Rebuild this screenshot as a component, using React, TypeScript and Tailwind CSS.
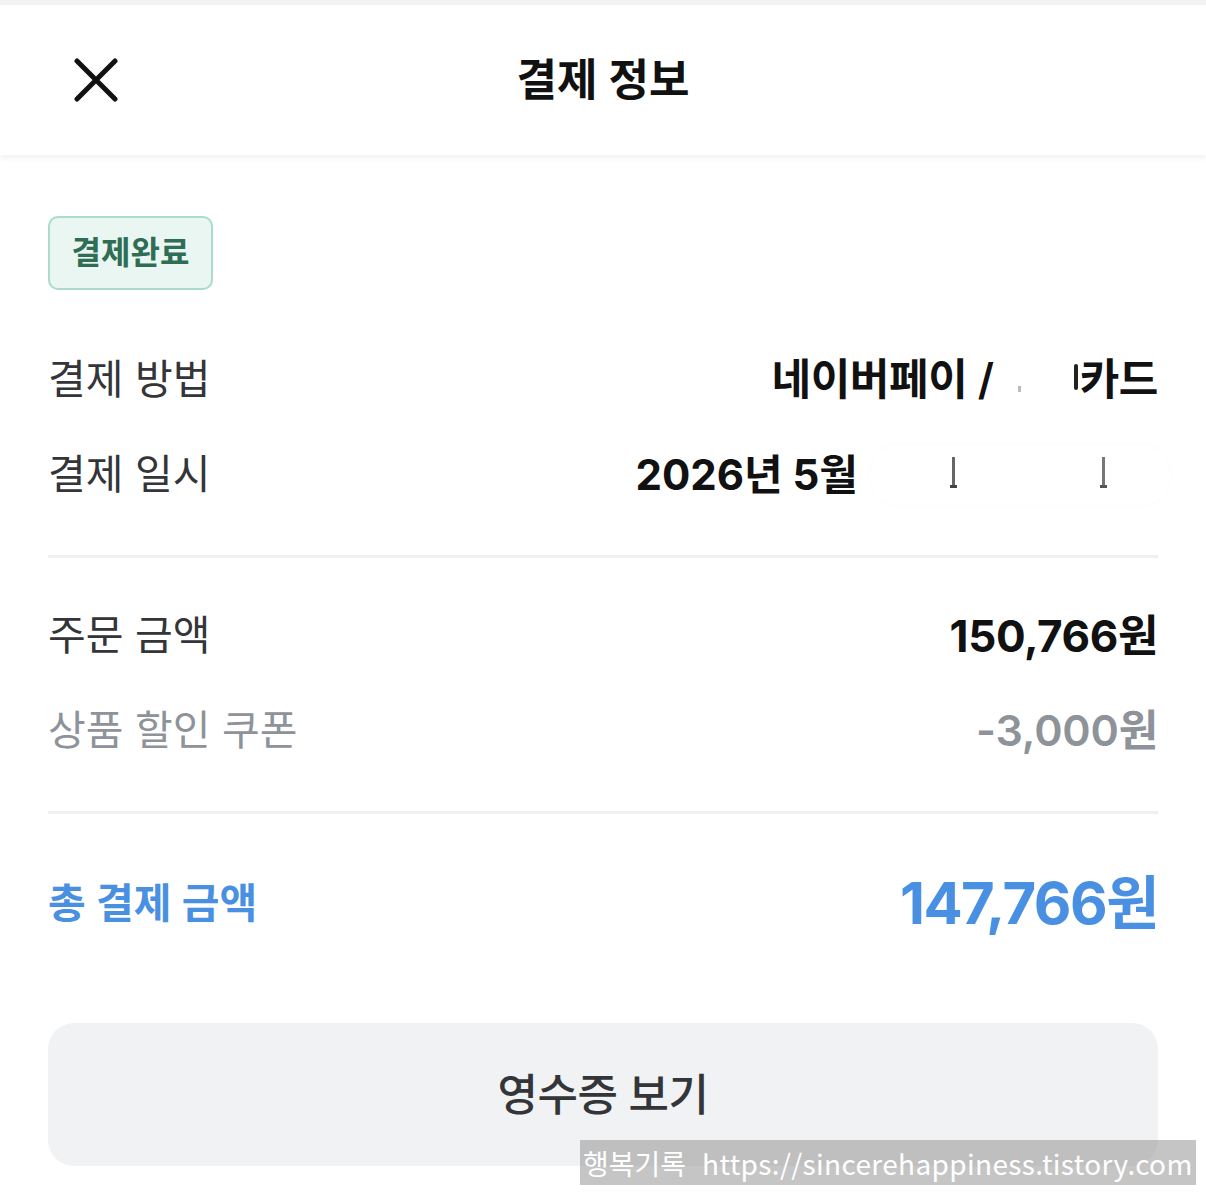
import React from 'react';

const KR = { fontFamily: 'Inter, "Noto Sans CJK KR", sans-serif' };

const CloseIcon: React.FC = () => (
  <svg width="44" height="44" viewBox="0 0 44 44" fill="none">
    <path d="M3 3L41 41M41 3L3 41" stroke="#111" strokeWidth="5" strokeLinecap="round" />
  </svg>
);

const Row: React.FC<{ label: string; value: React.ReactNode; muted?: boolean }> = ({ label, value, muted }) => (
  <div className="flex h-[95px] items-center justify-between">
    <span className={`text-[41px] tracking-[0px] ${muted ? 'text-[#8e939a]' : 'text-[#333538]'}`}>{label}</span>
    {value}
  </div>
);

const App: React.FC = () => {
  return (
    <div className="relative h-[1197px] w-[1206px] overflow-hidden bg-white" style={KR}>
      <div className="h-[5px] bg-[#f3f3f3]" />
      {/* header */}
      <div className="relative flex h-[150px] items-center justify-center bg-white shadow-[0_3px_6px_rgba(0,0,0,0.06)]">
        <button className="absolute left-[74px] top-[53px]">
          <CloseIcon />
        </button>
        <h1 className="text-[44px] font-semibold text-[#111]">결제 정보</h1>
      </div>

      <div className="px-[48px] pt-[61px]">
        <div className="inline-flex h-[74px] w-[165px] items-center justify-center rounded-[10px] border-2 border-[#a9dcca] bg-[#e9f6f1]">
          <span className="text-[32px] font-bold text-[#2f6e54]">결제완료</span>
        </div>

        <div className="mt-[42px]">
          <Row
            label="결제 방법"
            value={
              <span className="flex items-center text-[43px] font-semibold tracking-[-0.4px] text-[#111]">
                네이버페이 /
                <span className="relative inline-block h-[40px] w-[86px]">
                  <span className="absolute left-[24px] top-[26px] h-[6px] w-[3px] bg-[#bbb]" />
                  <span className="absolute right-[2px] top-[4px] h-[26px] w-[4px] rounded-full bg-[#222]" />
                </span>
                카드
              </span>
            }
          />
          <Row
            label="결제 일시"
            value={
              <span className="-mr-[12px] flex items-center text-[42px] font-bold tracking-[0px] text-[#111]">
                2026년 5월
                <span className="relative ml-[12px] inline-block h-[60px] w-[300px] rounded-full bg-white shadow-[0_0_8px_rgba(0,0,0,0.02)]">
                  <span className="absolute left-[82px] top-[12px] h-[30px] w-[3px] bg-[#666]" />
                  <span className="absolute left-[80px] top-[40px] h-[3px] w-[7px] bg-[#444]" />
                  <span className="absolute left-[232px] top-[12px] h-[30px] w-[3px] bg-[#777]" />
                  <span className="absolute left-[230px] top-[40px] h-[3px] w-[7px] bg-[#555]" />
                </span>
              </span>
            }
          />
        </div>

        <div className="mt-[33px] h-[3px] bg-[#f0f0f0]" />

        <div className="mt-[30px]">
          <Row
            label="주문 금액"
            value={<span className="text-[44px] font-bold tracking-[-0.4px] text-[#111]">150,766원</span>}
          />
          <Row
            label="상품 할인 쿠폰"
            muted
            value={<span className="text-[43px] font-semibold tracking-[-0.2px] text-[#8e939a]">-3,000원</span>}
          />
        </div>

        <div className="mt-[33px] h-[3px] bg-[#f0f0f0]" />

        <div className="flex h-[185px] items-center justify-between pb-[6px]">
          <span className="text-[41px] font-semibold tracking-[0px] text-[#4a90e2]">총 결제 금액</span>
          <span className="text-[58px] font-bold tracking-[-1.5px] text-[#4a90e2]">147,766원</span>
        </div>

        <button className="mt-[24px] flex h-[143px] w-full items-center justify-center rounded-[26px] bg-[#f1f2f4]">
          <span className="text-[44px] font-medium tracking-[-0.5px] text-[#333538]">영수증 보기</span>
        </button>
      </div>

      {/* watermark */}
      <div
        className="absolute left-[580px] top-[1140px] flex h-[45px] w-[616px] items-center whitespace-nowrap bg-[rgba(150,150,150,0.55)] pl-[3px] text-[28px] text-white"
        style={{ fontFamily: '"Noto Sans CJK KR", "Noto Sans", sans-serif' }}
      >
        <span>행복기록</span>
        <span className="ml-[16px] tracking-[0.35px]">https://sincerehappiness.tistory.com</span>
      </div>
    </div>
  );
};

export default App;
